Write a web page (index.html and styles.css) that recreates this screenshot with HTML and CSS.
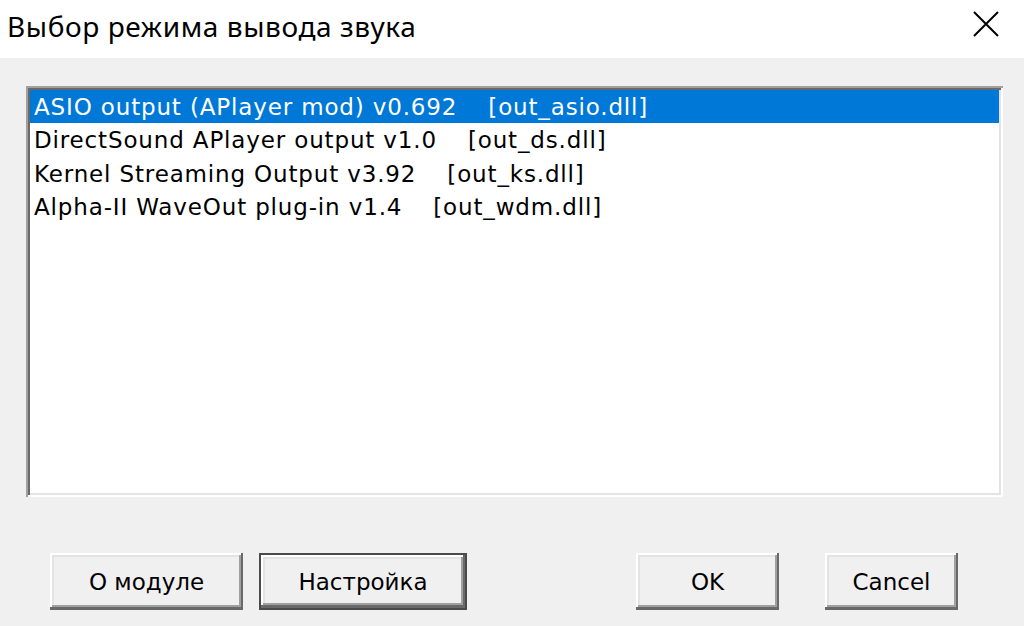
FILE: index.html
```html
<!DOCTYPE html>
<html lang="ru">
<head>
  <meta charset="UTF-8" />
  <title>Выбор режима вывода звука</title>
  <link rel="stylesheet" href="styles.css">
</head>
<body>

<div class="dialog">
  <header class="titlebar">
    <span class="title">Выбор режима вывода звука</span>
    <span class="close">
      <svg width="26" height="26" viewBox="0 0 26 26">
        <path d="M1 1 L25 25 M25 1 L1 25" stroke="#000" stroke-width="2" fill="none"/>
      </svg>
    </span>
  </header>

  <main class="content">
    <!-- list of output plugins -->
    <div class="listbox">
      <div class="item selected">ASIO output (APlayer mod) v0.692<span class="dll">[out_asio.dll]</span></div>
      <div class="item">DirectSound APlayer output v1.0<span class="dll">[out_ds.dll]</span></div>
      <div class="item">Kernel Streaming Output v3.92<span class="dll">[out_ks.dll]</span></div>
      <div class="item">Alpha-II WaveOut plug-in v1.4<span class="dll">[out_wdm.dll]</span></div>
    </div>

    <div class="buttons">
      <button class="btn btn-about">О модуле</button>
      <button class="btn btn-setup default">Настройка</button>
      <span class="spacer"></span>
      <button class="btn btn-ok">OK</button>
      <button class="btn btn-cancel">Cancel</button>
    </div>
  </main>
</div>

</body>
</html>
```

FILE: styles.css
```css
* {
  margin: 0;
  padding: 0;
  box-sizing: border-box;
}

html, body {
  width: 1024px;
  height: 626px;
  overflow: hidden;
  background: #f0f0f0;
  font-family: "DejaVu Sans", Verdana, sans-serif;
  color: #000;
}

.dialog {
  display: flex;
  flex-direction: column;
  height: 626px;
}

.titlebar {
  height: 58px;
  background: #fff;
  display: flex;
  align-items: center;
  padding: 0 25px 0 7px;
}

.title {
  font-family: "Noto Sans", "Open Sans", sans-serif;
  font-size: 28px;
  letter-spacing: 0.6px;
  flex: 1;
  margin-top: -6px;
}

.close {
  display: flex;
  width: 26px;
  height: 26px;
  margin-top: -10px;
}

.content {
  flex: 1;
  padding: 28px 21px 0 26px;
  display: flex;
  flex-direction: column;
}

/* sunken list box */
.listbox {
  height: 411px;
  background: #fff;
  padding: 4px;
  box-shadow:
    inset 2px 2px #a0a0a0,
    inset -2px -2px #fff,
    inset 4px 4px #696969,
    inset -4px -4px #e3e3e3;
}

.item {
  height: 33.5px;
  line-height: 34px;
  padding-left: 4px;
  font-size: 23px;
  letter-spacing: 0.85px;
  white-space: nowrap;
}

.item.selected {
  background: #0078d7;
  color: #fff;
  height: 33px;
}

.dll {
  margin-left: 31px;
}

.buttons {
  display: flex;
  margin-top: 56px;
  padding: 0 45px 0 24px;
  gap: 16px;
}

.spacer {
  flex: 1;
}

.btn {
  height: 57px;
  background: #f0f0f0;
  border: none;
  font-family: "DejaVu Sans", Verdana, sans-serif;
  font-size: 23px;
  color: #000;
  box-shadow:
    inset -2px -3px #696969,
    inset 2px 2px #fff,
    inset -4px -5px #a0a0a0,
    inset 4px 4px #e3e3e3;
}

.btn-about { width: 193px; }
.btn-setup { width: 208px; }
.btn-ok { width: 143px; margin-right: 30px; }
.btn-cancel { width: 133px; }

.btn.default {
  box-shadow:
    inset 0 0 0 2px #4a4a4a,
    inset -4px -5px #696969,
    inset 4px 4px #fff,
    inset -6px -7px #a0a0a0,
    inset 6px 6px #e3e3e3;
}
```
